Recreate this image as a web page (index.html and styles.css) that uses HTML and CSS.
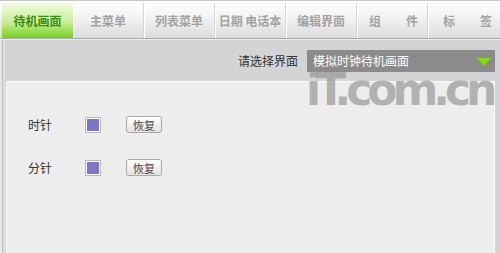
FILE: index.html
```html
<!DOCTYPE html>
<html>
<head>
    <link rel="stylesheet" href="styles.css">
</head>
<body>
    <div class="page">
        <div class="tabs">
            <div class="tab active">待机画面</div>
            <div class="tab">主菜单</div>
            <div class="tab">列表菜单</div>
            <div class="tab">日期&nbsp;电话本</div>
            <div class="tab">编辑界面</div>
            <div class="tab spread"><span>组</span><span>件</span></div>
            <div class="tab spread last"><span>标</span><span>签</span></div>
        </div>
        <div class="toolbar">
            <span class="lbl">请选择界面</span>
            <div class="select">
                <span>模拟时钟待机画面</span>
                <span class="arrow"></span>
            </div>
        </div>
        <div class="panel">
            <div class="row">
                <span class="name">时针</span>
                <span class="swatch"></span>
                <button class="btn">恢复</button>
            </div>
            <div class="row">
                <span class="name">分针</span>
                <span class="swatch"></span>
                <button class="btn">恢复</button>
            </div>
        </div>
        <div class="mark">iT.com.cn</div>
    </div>
</body>
</html>
```

FILE: styles.css
```css
body
{
    margin: 0;
    font-family: "Noto Sans CJK SC", sans-serif;
}
.page
{
    position: relative;
    width: 500px;
    height: 253px;
    overflow: hidden;
    background: linear-gradient(to right, #e6e6e6 0, #e6e6e6 2px, #bdbdbd 2px, #bdbdbd 3px, #e0e0e0 3px, #e0e0e0 5px, #d4d4d4 5px);
}
.tabs
{
    display: flex;
    height: 37px;
    padding-left: 2px;
    border-top: 1px solid #c6c6c6;
    border-bottom: 1px solid #a8a8a8;
    background: linear-gradient(#ffffff, #f4f4f4 40%, #dcdcdc);
}
.tab
{
    width: 70px;
    margin-top: 2px;
    display: flex;
    align-items: center;
    justify-content: center;
    font-size: 12px;
    font-weight: bold;
    color: #a3a3a3;
    border-right: 1px solid #d6d6d6;
    box-shadow: 1px 0 0 #ffffff;
    white-space: nowrap;
}
.tab.active
{
    width: 71px;
    color: #3d8c12;
    border-right: none;
    background: linear-gradient(#eefbe0, #c8ee98 55%, #72d21c);
}
.tab.spread
{
    justify-content: space-between;
    padding: 0 9px 0 12px;
    width: 49px;
}
.tab.last
{
    width: 49px;
    padding: 0 8px 0 15px;
    border-right: none;
    box-shadow: none;
}
.toolbar
{
    height: 41px;
    display: flex;
    justify-content: flex-end;
    align-items: center;
    padding-right: 5px;
    border-top: 1px solid #ececec;
}
.lbl
{
    font-size: 12px;
    color: #333333;
    margin-right: 9px;
}
.select
{
    width: 182px;
    height: 22px;
    padding-left: 6px;
    display: flex;
    align-items: center;
    justify-content: space-between;
    background: #8b8b8b;
    color: #ffffff;
    font-size: 12px;
}
.arrow
{
    width: 0;
    height: 0;
    margin-right: 4px;
    margin-top: 3px;
    border-left: 7px solid transparent;
    border-right: 7px solid transparent;
    border-top: 8px solid #7ee000;
}
.panel
{
    height: 137px;
    margin: 0 5px 0 6px;
    padding: 34px 0 0 21px;
    background: #ededed;
    border: 1px solid #fafafa;
    border-bottom-color: #cfcfcf;
}
.row
{
    display: flex;
    align-items: center;
    height: 17px;
    margin-bottom: 26px;
}
.name
{
    width: 58px;
    font-size: 12px;
    color: #333333;
}
.swatch
{
    width: 12px;
    height: 12px;
    background: #7b77c6;
    border: 1px solid #ffffff;
    box-shadow: 0 0 0 1px #b8b8b8;
    margin-right: 26px;
}
.btn
{
    width: 36px;
    height: 17px;
    padding: 0;
    font-family: "Noto Sans CJK SC", sans-serif;
    font-size: 11px;
    color: #444444;
    border: 1px solid #a9a9a9;
    border-radius: 3px;
    background: linear-gradient(#ffffff, #e2e2e2);
}
.mark
{
    position: absolute;
    left: 306px;
    top: 66px;
    line-height: 48px;
    font-family: "DejaVu Sans", sans-serif;
    font-weight: bold;
    font-size: 44px;
    letter-spacing: -5px;
    color: rgba(150, 150, 150, 0.7);
}
```
